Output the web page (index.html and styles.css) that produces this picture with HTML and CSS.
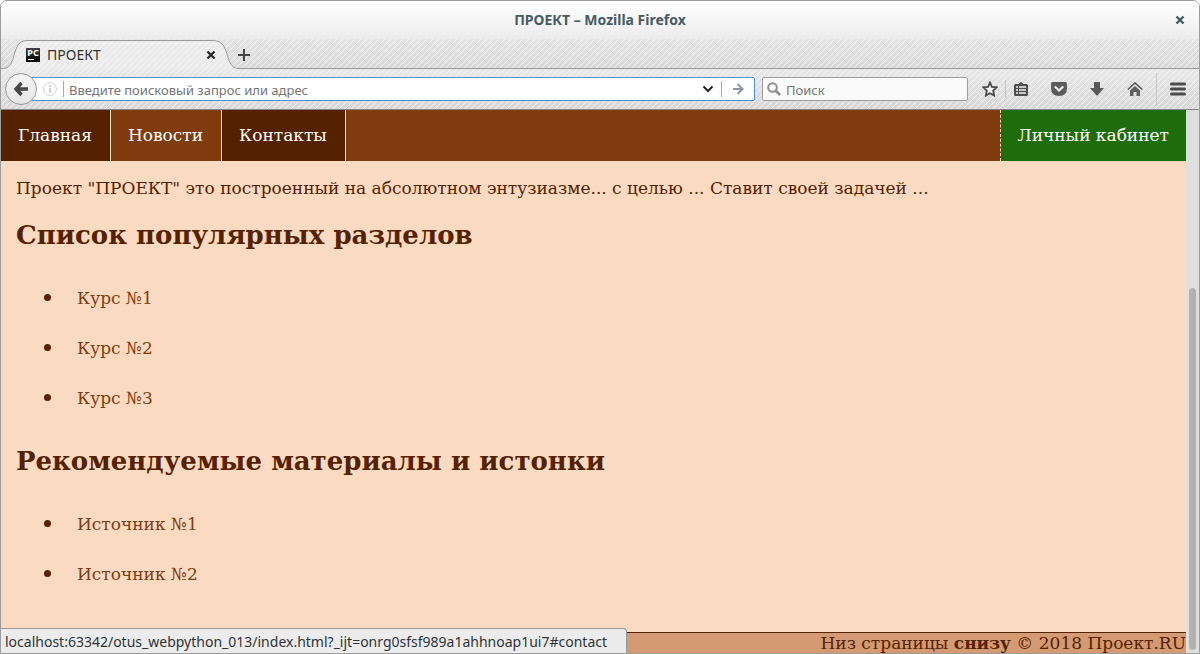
FILE: index.html
```html
<!DOCTYPE html>
<html lang="ru">
<head>
<meta charset="utf-8">
<title>ПРОЕКТ</title>
<link rel="stylesheet" href="styles.css">
</head>
<body>
<div class="window">
  <header class="titlebar">
    <h1 class="window-title">ПРОЕКТ – Mozilla Firefox</h1>
    <button class="icon-button window-close" aria-label="Закрыть окно">
      <svg width="10" height="10" viewBox="0 0 10 10"><path d="M1.5 1.5l7 7M8.5 1.5l-7 7" stroke="#485b63" stroke-width="2.4" fill="none"/></svg>
    </button>
  </header>
  <div class="tabs">
    <div class="tab">
      <svg class="tab-shape" viewBox="0 0 240 30" aria-hidden="true">
        <defs><pattern id="stripes" width="6" height="6" patternUnits="userSpaceOnUse"><path d="M0 6L6 0" stroke="#fff" stroke-opacity=".6"/></pattern></defs>
        <path class="tab-fill" d="M0 30V29H2C17 29 9 2 26 2H212C231 2 222 29 238 29H240V30Z"/>
        <path fill="url(#stripes)" d="M0 30V29H2C17 29 9 2 26 2H212C231 2 222 29 238 29H240V30Z"/>
        <path d="M0 29.500H2C17 29.500 9 1.500 26 1.500H212C231 1.500 222 29.500 238 29.500H240" fill="none" stroke="#989b9e"/>
      </svg>
      <span class="favicon">PC</span>
      <span class="tab-label">ПРОЕКТ</span>
      <button class="icon-button" aria-label="Закрыть вкладку">
        <svg width="10" height="10" viewBox="0 0 10 10"><path d="M1.500 1.500l7 7M8.500 1.500l-7 7" stroke="#292929" stroke-width="2.400" fill="none"/></svg>
      </button>
    </div>
    <button class="icon-button new-tab" aria-label="Новая вкладка">
      <svg width="12" height="12" viewBox="0 0 12 12"><path d="M0 6h12M6 0v12" stroke="#444" stroke-width="2"/></svg>
    </button>
  </div>
  <div class="toolbar">
    <button class="back" aria-label="Назад">
      <svg width="16" height="16" viewBox="0 0 16 16"><path d="M8.500 2L3 8l5.500 6M3.500 8H15" stroke="#484848" stroke-width="3.400" fill="none"/></svg>
    </button>
    <div class="address">
      <svg width="14" height="14" viewBox="0 0 14 14"><circle cx="7" cy="7" r="6.400" fill="none" stroke="#cfcfcf"/><path d="M7 3v2M7 6v5" stroke="#cfcfcf" stroke-width="2"/></svg>
      <span class="line line-info"></span>
      <input class="address-input" type="text" aria-label="Адрес" placeholder="Введите поисковый запрос или адрес">
      <button class="icon-button" aria-label="История">
        <svg width="12" height="8" viewBox="0 0 12 8"><path d="M1.500 1.500L6 6l4.500-4.500" stroke="#222" stroke-width="2" fill="none"/></svg>
      </button>
      <span class="line line-go"></span>
      <button class="icon-button go" aria-label="Перейти">
        <svg width="12" height="12" viewBox="0 0 12 12"><path d="M1 6h9M5.500 1l5 5-5 5" stroke="#8796a5" stroke-width="2" fill="none"/></svg>
      </button>
    </div>
    <div class="search">
      <svg width="14" height="14" viewBox="0 0 14 14"><circle cx="5.500" cy="5.500" r="4.300" fill="none" stroke="#8f8f8f" stroke-width="2"/><path d="M8.500 8.500l4.500 4.500" stroke="#8f8f8f" stroke-width="2.600"/></svg>
      <input class="search-input" type="text" aria-label="Поиск" placeholder="Поиск">
    </div>
    <div class="tools">
      <button class="icon-button" aria-label="Закладка"><svg width="16" height="16" viewBox="0 0 16 16"><path d="M8 1.500l1.900 4.300 4.700.5-3.400 3.300.9 4.900L8 12.200l-4.100 2.300.9-4.900L1.400 6.300l4.700-.5z" stroke="#4a4a4a" stroke-width="1.800" fill="#f2f2f2"/></svg></button>
      <span class="line line-soft"></span>
      <button class="icon-button" aria-label="Список закладок"><svg width="14" height="14" viewBox="0 0 14 14"><path d="M1.500 2h3L7 0l2.500 2h3Q14 2 14 3.500v9q0 1.500-1.500 1.500h-11Q0 14 0 12.500v-9Q0 2 1.500 2z" fill="#4d4d4d"/><path d="M2 5h2M5 5h7M2 8h2M5 8h7M2 11h2M5 11h7" stroke="#f0f0f0" stroke-width="1.700"/></svg></button>
      <button class="icon-button" aria-label="Pocket"><svg width="16" height="14" viewBox="0 0 16 14"><path d="M1.500 0h13Q16 0 16 1.500V6q0 8-8 8T0 6V1.500Q0 0 1.500 0z" fill="#5c5c5c"/><path d="M3.800 4.500L8 8.500l4.200-4" stroke="#eee" stroke-width="2.200" fill="none"/></svg></button>
      <button class="icon-button" aria-label="Загрузки"><svg width="14" height="14" viewBox="0 0 14 14"><path d="M4 0h6v6h4l-7 8-7-8h4z" fill="#595959"/></svg></button>
      <button class="icon-button" aria-label="Домой"><svg width="16" height="14" viewBox="0 0 16 14"><path d="M.8 7.500L8 1l7.200 6.500" fill="none" stroke="#555" stroke-width="1.600"/><path d="M3 8.500l5-4.500 5 4.500V14H9.500v-4h-3v4H3z" fill="#606060"/></svg></button>
      <span class="line line-tall"></span>
      <button class="icon-button" aria-label="Меню"><svg width="16" height="14" viewBox="0 0 16 14"><path d="M1.500 2h13M1.500 7h13M1.500 12h13" stroke="#4b4b4b" stroke-width="3" stroke-linecap="round"/></svg></button>
    </div>
  </div>
  <div class="viewport">
    <div class="page">
      <nav class="menu">
        <a class="menu-link dark" href="#main">Главная</a>
        <a class="menu-link" href="#news">Новости</a>
        <a class="menu-link dark" href="#contact">Контакты</a>
        <a class="menu-link account" href="#account">Личный кабинет</a>
      </nav>
      <main class="content">
        <p class="intro">Проект "ПРОЕКТ" это построенный на абсолютном энтузиазме... с целью ... Ставит своей задачей ...</p>
        <h2 class="heading">Список популярных разделов</h2>
        <ul class="links">
          <li><a href="#c1">Курс №1</a></li>
          <li><a href="#c2">Курс №2</a></li>
          <li><a href="#c3">Курс №3</a></li>
        </ul>
        <h2 class="heading">Рекомендуемые материалы и истонки</h2>
        <ul class="links">
          <li><a href="#s1">Источник №1</a></li>
          <li><a href="#s2">Источник №2</a></li>
        </ul>
      </main>
      <footer class="footer">Низ страницы <b>снизу</b> © 2018 Проект.RU</footer>
    </div>
    <div class="scrollbar"><div class="thumb"></div></div>
  </div>
  <div class="status">localhost:63342/otus_webpython_013/index.html?_ijt=onrg0sfsf989a1ahhnoap1ui7#contact</div>
</div>
</body>
</html>
```
FILE: styles.css
```css
* { box-sizing: border-box; }
body { margin: 0; background: #fff; }
svg { display: block; flex: none; }
.window {
  --stripes: linear-gradient(135deg, #fff0 44%, #fffa 45% 55%, #fff0 56%) 0 0 / 6px 6px;
  position: relative;
  display: flex;
  flex-direction: column;
  height: 100vh;
  overflow: hidden;
  border: 1px solid #9c9c9c;
  border-radius: 7px 7px 0 0;
  font: 14px/18px "Noto Sans", "Open Sans", sans-serif;
  color: #333;
}
.icon-button { display: flex; padding: 0; border: 0; background: none; }
.titlebar {
  display: grid;
  grid-template-columns: 1fr auto 1fr;
  align-items: center;
  height: 38px;
  padding: 0 14px;
  background: linear-gradient(#fff, #ececec);
}
.window-title { grid-column: 2; margin: 0; font-size: 14px; line-height: 18px; font-weight: 700; color: #485b63; }
.window-close { justify-self: end; }
.tabs {
  display: flex;
  height: 30px;
  background:
    linear-gradient(#999, #999) bottom / 100% 1px no-repeat,
    var(--stripes),
    linear-gradient(#e4e4e4, #d9d9d9);
}
.tab { position: relative; display: flex; align-items: center; width: 240px; height: 30px; padding: 2px 25px 0; }
.tab-shape { position: absolute; inset: 0; width: 100%; height: 100%; }
.tab-fill { fill: #ebebeb; }
.tab > :not(.tab-shape) { position: relative; }
.favicon { width: 14px; height: 14px; margin-right: 7px; background: linear-gradient(#444, #000); color: #fff; font-size: 9px; line-height: 9px; font-weight: 700; text-align: center; }
.favicon::after { content: ""; display: block; width: 6px; height: 1px; margin: 2px 0 0 2px; background: #fff; }
.tab-label { flex: 1; }
.new-tab { align-self: center; margin: 1px 0 0 -3px; }
.toolbar {
  display: flex;
  align-items: center;
  height: 41px;
  padding: 0 13px 0 4px;
  border-bottom: 1px solid #858585;
  background: var(--stripes), linear-gradient(#e8e8e8, #d8d8d8);
}
.back { position: relative; z-index: 1; flex: none; display: grid; place-items: center; width: 32px; height: 32px; padding: 0; border: 1px solid #999; border-radius: 50%; background: linear-gradient(#f4f4f4, #e6e6e6); }
.address { flex: 1; display: flex; align-items: center; height: 24px; margin-left: -8px; padding: 0 10px 0 13px; background: #fff; border: 1px solid #4a90d9; border-radius: 2px; }
.line { flex: none; width: 1px; height: 16px; background: #aaa; }
.line-info { margin: 0 5px 0 6px; }
.line-go { margin: 0 10px 0 7px; }
.line-soft { height: 18px; margin: 0 8px 0 7px; background: #c4c4c4; }
.line-tall { height: 32px; margin: 0 13px; background: #c8c8c8; }
.address-input, .search-input { min-width: 0; flex: 1; padding: 2px 0 0; border: 0; outline: 0; background: none; font: inherit; font-size: 13px; }
.address-input::placeholder, .search-input::placeholder { color: #757575; opacity: 1; }
.search { flex: none; display: flex; align-items: center; gap: 5px; width: 206px; height: 24px; margin-left: 7px; padding: 0 4px; background: #fafafa; border: 1px solid #9d9d9d; border-radius: 2px; }
.tools { display: flex; align-items: center; margin-left: 14px; }
.tools .icon-button + .icon-button { margin-left: 23px; }
.viewport { flex: 1; display: flex; min-height: 0; }
.page { flex: 1; display: flex; flex-direction: column; background: #fbdac2; color: #552200; font: 17px/19px "DejaVu Serif", serif; }
.menu { display: flex; background: #803c0f; }
.menu-link { padding: 16px 18px 16px 17px; border-right: 1px solid #fbdac2; color: #fff; text-decoration: none; }
.dark { background: #552200; }
.account { margin-left: auto; padding-right: 17px; border-right: 0; border-left: 1px dashed #fbdac2; background: #1e6c0b; }
.content { flex: 1; padding: 18px 15px 0; }
.intro { margin: 0; }
.heading { margin: 22px 0; font-size: 26px; line-height: 32px; }
.intro + .heading { margin-top: 21px; }
.links { margin: 0; padding-left: 48px; line-height: 48px; }
.links li { padding: 0 0 1px 13px; }
.links li::marker { font-size: 22px; }
.links a { color: #803c0f; text-decoration: none; }
.footer { border-top: 1px solid #552200; background: #d49a73; text-align: right; line-height: 20px; }
.scrollbar { flex: none; display: flex; width: 13px; padding: 178px 3px 3px; background: #dfdfdf; }
.thumb { flex: 1; border-radius: 4px; background: #b2b2b2; }
.status { position: absolute; left: 0; bottom: 0; padding: 4px 19px 2px 4px; border: 1px solid #999; border-width: 1px 1px 0 0; border-radius: 0 4px 0 0; background: #ececec; color: #2e3436; }
```
